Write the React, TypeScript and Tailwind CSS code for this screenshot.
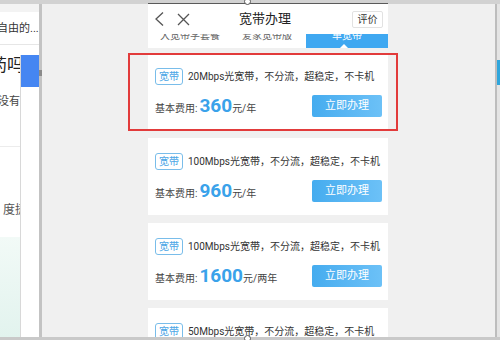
import React from "react";

const plans = [
  { title: "20Mbps光宽带，不分流，超稳定，不卡机", price: "360", unit: "元/年" },
  { title: "100Mbps光宽带，不分流，超稳定，不卡机", price: "960", unit: "元/年" },
  { title: "100Mbps光宽带，不分流，超稳定，不卡机", price: "1600", unit: "元/两年" },
  { title: "50Mbps光宽带，不分流，超稳定，不卡机", price: "600", unit: "元/年" },
];

function PlanCard({ title, price, unit }: { title: string; price: string; unit: string }) {
  return (
    <div className="h-[77px] shrink-0 bg-white px-[7px] pt-[15px]">
      <div className="flex h-[17px] items-center">
        <span className="flex h-[17px] w-[28px] items-center justify-center rounded-[3px] border border-[#79bdea] text-[10px] text-[#4aa6e6]">
          宽带
        </span>
        <span className="ml-[5px] text-[10px] text-[#333]">{title}</span>
      </div>
      <div className="mt-[10px] flex h-[22px] items-center justify-between">
        <div className="flex items-baseline text-[10px] text-[#444]">
          <span>基本费用:</span>
          <span className="ml-[2px] text-[19px] font-bold leading-none text-[#3aa2ea]">{price}</span>
          <span>{unit}</span>
        </div>
        <button className="mr-[-1px] h-[22px] w-[70px] rounded-[2px] bg-gradient-to-r from-[#45acef] to-[#6cc1f7] text-[11px] text-white">
          立即办理
        </button>
      </div>
    </div>
  );
}

export default function App() {
  return (
    <div
      className="relative flex h-[340px] w-[500px] flex-col overflow-hidden bg-[#f0f0f0]"
      style={{ fontFamily: 'Roboto, "Noto Sans CJK SC", sans-serif' }}
    >
      {/* top window strip */}
      <div className="flex h-[4px] shrink-0 bg-[#d2d2d2]">
        <div className="w-[148px]" />
        <div className="w-[240px] border-b border-[#5a5a5a]" />
      </div>

      <div className="flex min-h-0 flex-1">
        {/* page behind, on the left */}
        <div className="relative w-[39px] shrink-0 overflow-hidden bg-white">
          <div className="h-[8px] bg-[#f3f3f3]" />
          <div className="ml-[-3px] mt-[9px] whitespace-nowrap text-[11px] text-[#333]">自由的...</div>
          <div className="mt-[6px] h-px bg-[#e6e6e6]" />
          <div className="ml-[-10px] mt-[12px] whitespace-nowrap text-[17px] leading-none text-[#222]">药吗</div>
          <div className="ml-[-2px] mt-[20px] whitespace-nowrap text-[11px] text-[#444]">没有与</div>
          <div className="mt-[36px] h-px w-[20px] bg-[#ececec]" />
          <div className="ml-[3px] mt-[54px] whitespace-nowrap text-[12px] text-[#555]">度捷</div>
          <div className="mt-[18px] h-[100px] w-[20px] bg-gradient-to-b from-[#f2faf7] to-[#e2f3ee]" />

          <div className="absolute bottom-0 left-[20px] top-[51px] flex w-[19px] flex-col border-l border-[#d8d8d8] bg-white">
            <div className="h-[32px] bg-[#4586f2]" />
          </div>
        </div>
        <div className="relative w-[3px] shrink-0 bg-[#c3c3c3]">
          <div className="absolute left-0 top-[66px] h-[6px] w-[3px] bg-[#8a8a8a]" />
        </div>

        {/* main canvas */}
        <div className="flex flex-1 pl-[106px]">
          <div className="flex w-[240px] flex-col">
            {/* header */}
            <div className="flex h-[30px] shrink-0 items-center bg-white pl-[5px] pr-[5px]">
              <svg width="12" height="16" viewBox="0 0 12 16" fill="none" stroke="#555" strokeWidth="1.3">
                <path d="M10 1.5 L3 8 L10 14.5" />
              </svg>
              <svg className="ml-[12px]" width="13" height="13" viewBox="0 0 13 13" fill="none" stroke="#555" strokeWidth="1.3">
                <path d="M1 1 L12 12 M12 1 L1 12" />
              </svg>
              <div className="flex-1 pr-[12px] text-center text-[13px] text-[#222]">宽带办理</div>
              <div className="flex h-[17px] w-[31px] items-center justify-center rounded-[2px] border border-[#e2e2e2] text-[10px] text-[#333]">
                评价
              </div>
            </div>
            {/* tabs, scrolled under the header */}
            <div className="flex h-[14px] shrink-0 overflow-hidden bg-white">
              <div className="w-[158px] pl-[12px]">
                <div className="mt-[-6px] flex gap-[22px] whitespace-nowrap text-[10px] text-[#666]">
                  <span>大宽带学套餐</span>
                  <span>爱家宽带版</span>
                </div>
              </div>
              <div className="relative flex-1 bg-[#3fa8f1]">
                <div className="mt-[-6px] text-center text-[10px] text-white">单宽带</div>
                <div className="absolute bottom-0 left-[34px] h-0 w-0 border-x-[4px] border-b-[4px] border-x-transparent border-b-white" />
              </div>
            </div>
            {/* plan list */}
            <div className="mt-[5px] flex min-h-0 flex-col gap-[8px] overflow-hidden">
              {plans.map((p, i) => (
                <PlanCard key={i} {...p} />
              ))}
            </div>
          </div>
        </div>

        {/* right window edge */}
        <div className="flex w-[5px] shrink-0">
          <div className="w-[2px] bg-[#bdbdbd]" />
          <div className="flex-1 bg-[#e4e4e4]">
            <div className="mt-[56px] h-[25px] bg-[#2fa6dc]" />
          </div>
        </div>
      </div>

      {/* bottom window strip */}
      <div className="h-[3px] shrink-0 bg-[#c9c9c9]" />

      {/* drag handles */}
      <div className="absolute left-[244px] top-[-2px] h-[7px] w-[7px] rounded-full border border-[#555] bg-white" />
      <div className="absolute bottom-[-2px] left-[244px] h-[7px] w-[7px] rounded-full border border-[#555] bg-white" />

      {/* red highlight box */}
      <div className="absolute left-[128px] top-[53px] h-[78px] w-[270px] border-2 border-[#e23b3b]" />
    </div>
  );
}
